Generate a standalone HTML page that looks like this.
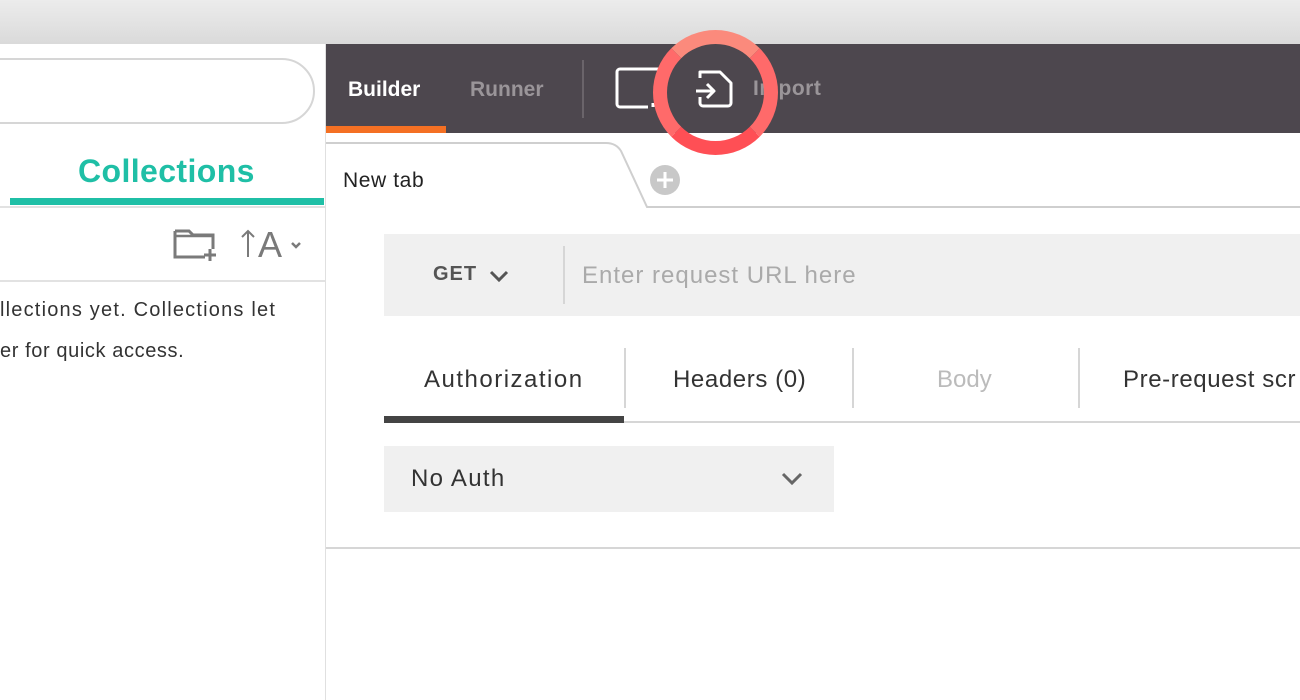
<!DOCTYPE html><html><head><style>
body{margin:0;width:1300px;height:700px;overflow:hidden;background:#fff;font-family:"Liberation Sans",sans-serif;position:relative}
div,span{position:absolute;box-sizing:border-box}
.t{white-space:nowrap}
</style></head><body>
<div style="left:0;top:0;width:1300px;height:44px;background:linear-gradient(#ececec,#dadada)"></div>
<div style="left:325px;top:44px;width:1px;height:656px;background:#e0e0e0"></div>
<div style="left:-40px;top:58px;width:355px;height:66px;border:2px solid #d6d6d6;border-radius:33px"></div>
<div class="t" style="left:78px;top:153px;font-size:32px;color:#1fbfa6;font-weight:bold;letter-spacing:0.4px">Collections</div>
<div style="left:10px;top:198px;width:314px;height:7px;background:#1fbfa6"></div>
<div style="left:0;top:206px;width:325px;height:2px;background:#e2e2e2"></div>
<svg style="position:absolute;left:170px;top:225px" width="140" height="40"><path d="M5 6h14l4 4h20v14M5 6v26h30" fill="none" stroke="#7a7a7a" stroke-width="3"/><path d="M5 11h38" stroke="#7a7a7a" stroke-width="2.5" fill="none"/><path d="M40 24v12M34 30h12" stroke="#7a7a7a" stroke-width="3"/><path d="M78 6v26M72 12l6-6 6 6" stroke="#7a7a7a" stroke-width="2" fill="none"/><text x="88" y="32" font-size="36" fill="#7a7a7a" font-family="Liberation Sans">A</text><path d="M122 18l4 4 4-4" stroke="#7a7a7a" stroke-width="2.5" fill="none"/></svg>
<div style="left:0;top:280px;width:325px;height:2px;background:#e2e2e2"></div>
<div class="t" style="left:0;top:299px;font-size:20px;color:#333;letter-spacing:1.2px">llections yet. Collections let</div>
<div class="t" style="left:0;top:340px;font-size:20px;color:#333;letter-spacing:0.6px">er for quick access.</div>

<div style="left:326px;top:44px;width:974px;height:89px;background:#4d474e"></div>
<div class="t" style="left:348px;top:78px;font-size:21px;color:#fff;font-weight:bold">Builder</div>
<div class="t" style="left:470px;top:78px;font-size:21px;color:#9a9599;font-weight:bold">Runner</div>
<div style="left:326px;top:126px;width:120px;height:7px;background:#f47023"></div>
<div style="left:582px;top:60px;width:2px;height:58px;background:#6a646a"></div>
<svg style="position:absolute;left:610px;top:65px" width="140" height="50"><rect x="7" y="4" width="44" height="38" rx="3" fill="none" stroke="#fff" stroke-width="3"/><rect x="38" y="30" width="14" height="14" fill="#4d474e"/><path d="M43 38v4" stroke="#fff" stroke-width="3"/><path d="M90 13v-6h20l11 11v20a3 3 0 0 1-3 3h-25a3 3 0 0 1-3-3v-6M86 26h17M97 19l7 7-7 7" fill="none" stroke="#fff" stroke-width="3" stroke-linejoin="round"/></svg>
<div class="t" style="left:753px;top:77px;font-size:21px;color:#9a9599;font-weight:bold;letter-spacing:0.5px">Import</div>
<div style="left:653px;top:30px;width:125px;height:125px;border-radius:50%;border:14px solid #ff6a6a;border-top-color:#fb8a7c;border-bottom-color:#ff4f55"></div>

<svg style="position:absolute;left:326px;top:142px" width="974" height="70"><path d="M0 1h280q10 0 15 8l26 56h653" fill="none" stroke="#cfcfcf" stroke-width="2"/><circle cx="339" cy="38" r="15" fill="#c8c8c8"/><path d="M339 30v16M331 38h16" stroke="#fff" stroke-width="3"/></svg>
<div class="t" style="left:343px;top:169px;font-size:21px;color:#222;letter-spacing:0.6px">New tab</div>

<div style="left:384px;top:234px;width:916px;height:82px;background:#f0f0f0"></div>
<div class="t" style="left:433px;top:263px;font-size:20px;color:#555;font-weight:bold;letter-spacing:1px">GET</div>
<svg style="position:absolute;left:488px;top:268px" width="24" height="16"><path d="M3 4l8 8 8-8" fill="none" stroke="#555" stroke-width="3"/></svg>
<div style="left:563px;top:246px;width:2px;height:58px;background:#d6d6d6"></div>
<div class="t" style="left:582px;top:262px;font-size:24px;color:#aaa;letter-spacing:1px">Enter request URL here</div>

<div class="t" style="left:424px;top:366px;font-size:24px;color:#333;letter-spacing:1.5px">Authorization</div>
<div class="t" style="left:673px;top:366px;font-size:24px;color:#333;letter-spacing:0.6px">Headers (0)</div>
<div class="t" style="left:937px;top:366px;font-size:24px;color:#bbb">Body</div>
<div class="t" style="left:1123px;top:366px;font-size:24px;color:#333;letter-spacing:0.6px">Pre-request scr</div>
<div style="left:624px;top:348px;width:2px;height:60px;background:#d6d6d6"></div>
<div style="left:852px;top:348px;width:2px;height:60px;background:#d6d6d6"></div>
<div style="left:1078px;top:348px;width:2px;height:60px;background:#d6d6d6"></div>
<div style="left:384px;top:421px;width:916px;height:2px;background:#d6d6d6"></div>
<div style="left:384px;top:416px;width:240px;height:7px;background:#444"></div>

<div style="left:384px;top:446px;width:450px;height:66px;background:#f0f0f0"></div>
<div class="t" style="left:411px;top:465px;font-size:24px;color:#333;letter-spacing:1.3px">No Auth</div>
<svg style="position:absolute;left:780px;top:471px" width="24" height="16"><path d="M3 3l9 9 9-9" fill="none" stroke="#666" stroke-width="3"/></svg>
<div style="left:326px;top:547px;width:974px;height:2px;background:#d6d6d6"></div>
</body></html>
